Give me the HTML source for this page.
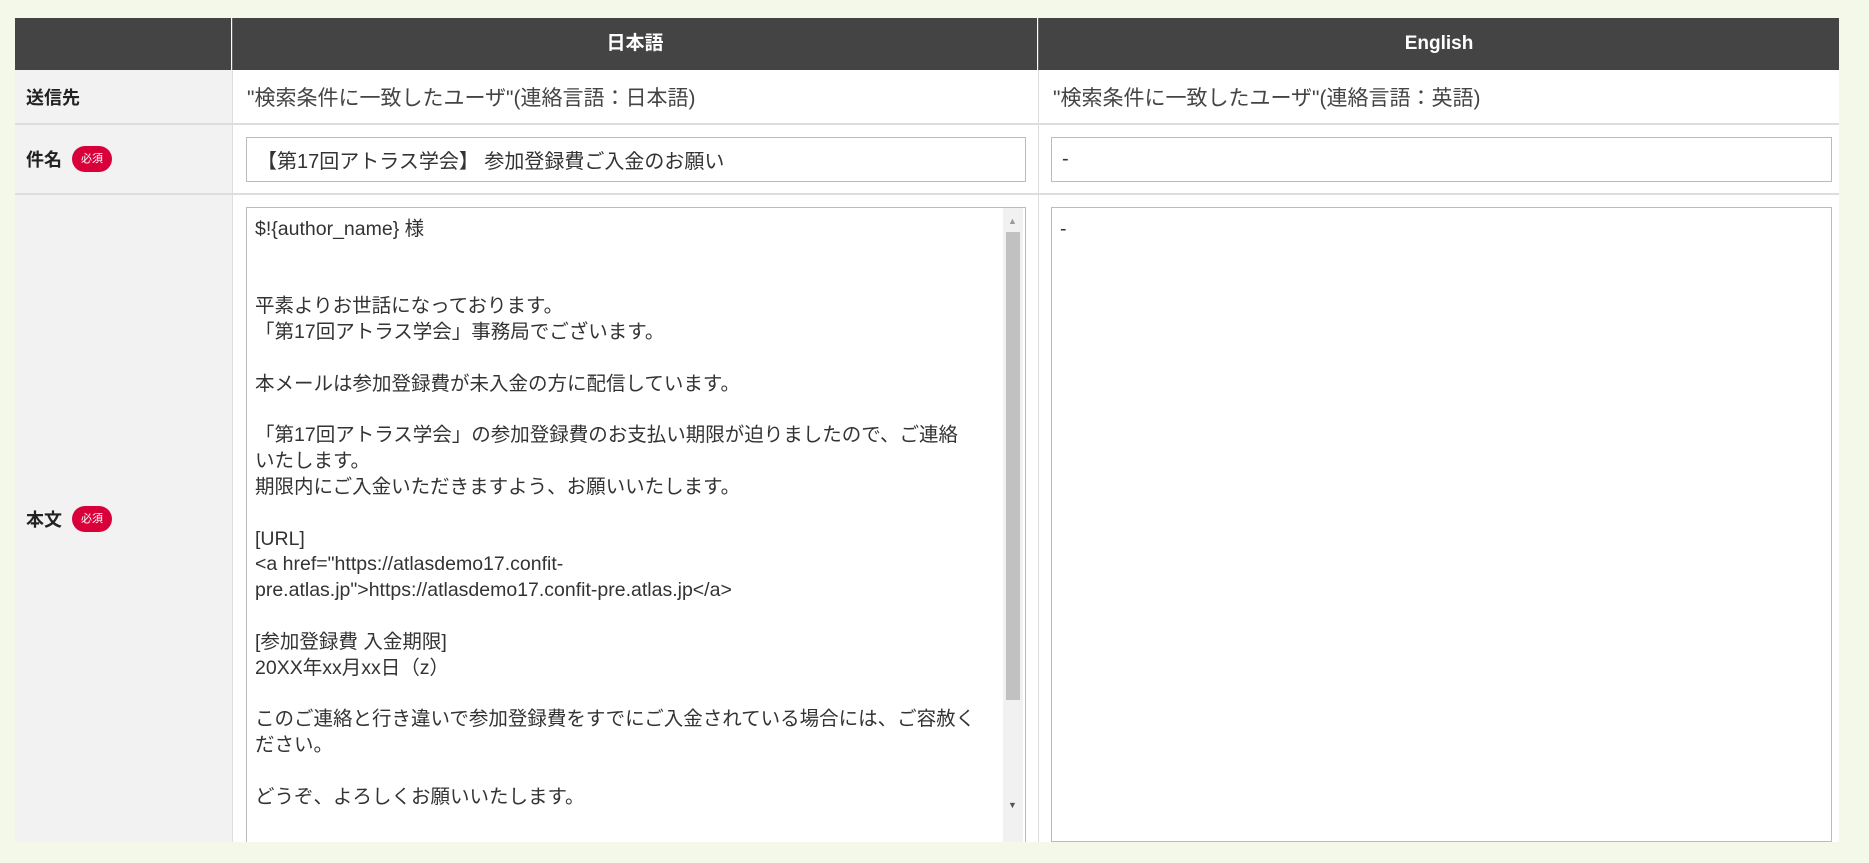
<!DOCTYPE html>
<html><head><meta charset="utf-8"><style>
*{box-sizing:border-box;margin:0;padding:0}
body{width:1869px;height:863px;background:#f3f8e8;font-family:"Liberation Sans","Noto Sans CJK JP",sans-serif;color:#333;position:relative;overflow:hidden}
.a{position:absolute}
.hd{background:#444;color:#fff;font-weight:bold;font-size:19px;text-align:center;line-height:52px;top:18px;height:52px}
.lbl{background:#f2f2f2;left:15px;width:217px;font-weight:bold;font-size:18px;display:flex;align-items:center;padding-left:11px;color:#222}
.badge{display:inline-block;background:#d9003a;color:#fff;font-size:11px;border-radius:13px;width:40px;height:26px;line-height:26px;text-align:center;margin-left:10px;font-weight:normal}
.cell{background:#fff;font-size:21px;display:flex;align-items:center;padding-left:14px;color:#444}
.inp{border:1px solid #bbb;background:#fff;font-size:20px;padding-left:10px;display:flex;align-items:center;color:#333}
.ta{border:1px solid #bbb;background:#fff;font-size:19.5px;line-height:25.8px;padding:9px 8px;white-space:pre;color:#333;overflow:hidden}
.line{background:#ddd}
</style></head><body>
<div class="a" style="left:15px;top:18px;width:1824px;height:824px;background:#fff"></div>
<div class="a hd" style="left:15px;width:216px"></div>
<div class="a hd" style="left:233px;width:804px">日本語</div>
<div class="a hd" style="left:1039px;width:800px">English</div>

<div class="a lbl" style="top:70px;height:53px">送信先</div>
<div class="a cell" style="left:233px;top:70px;width:804px;height:53px">"検索条件に一致したユーザ"(連絡言語：日本語)</div>
<div class="a cell" style="left:1039px;top:70px;width:800px;height:53px">"検索条件に一致したユーザ"(連絡言語：英語)</div>
<div class="a line" style="left:15px;top:123px;width:1824px;height:2px"></div>

<div class="a lbl" style="top:125px;height:68px">件名<span class="badge">必須</span></div>
<div class="a inp" style="left:246px;top:137px;width:780px;height:45px">【第17回アトラス学会】 参加登録費ご入金のお願い</div>
<div class="a inp" style="left:1051px;top:137px;width:781px;height:45px">-</div>
<div class="a line" style="left:15px;top:193px;width:1824px;height:2px"></div>

<div class="a lbl" style="top:195px;height:647px">本文<span class="badge">必須</span></div>
<div class="a line" style="left:232px;top:18px;width:1px;height:824px"></div>
<div class="a" style="left:232px;top:18px;width:1px;height:52px;background:#666"></div>
<div class="a line" style="left:1038px;top:18px;width:1px;height:824px"></div>
<div class="a" style="left:1038px;top:18px;width:1px;height:52px;background:#666"></div>

<div class="a ta" style="left:246px;top:207px;width:780px;height:650px">$!{author_name} 様


平素よりお世話になっております。
「第17回アトラス学会」事務局でございます。

本メールは参加登録費が未入金の方に配信しています。

「第17回アトラス学会」の参加登録費のお支払い期限が迫りましたので、ご連絡
いたします。
期限内にご入金いただきますよう、お願いいたします。

[URL]
&lt;a href="https://atlasdemo17.confit-
pre.atlas.jp"&gt;https://atlasdemo17.confit-pre.atlas.jp&lt;/a&gt;

[参加登録費 入金期限]
20XX年xx月xx日（z）

このご連絡と行き違いで参加登録費をすでにご入金されている場合には、ご容赦く
ださい。

どうぞ、よろしくお願いいたします。</div>
<div class="a" style="left:1003px;top:208px;width:20px;height:634px;background:#f1f1f1"></div>
<div class="a" style="left:1006px;top:232px;width:14px;height:468px;background:#c1c1c1"></div>
<div class="a" style="left:1008px;top:216px;font-size:9px;color:#999">▲</div>
<div class="a" style="left:1008px;top:800px;font-size:9px;color:#555">▼</div>
<div class="a ta" style="left:1051px;top:207px;width:781px;height:635px">-</div>
<div class="a" style="left:0;top:842px;width:1869px;height:21px;background:#f3f8e8"></div>
</body></html>
